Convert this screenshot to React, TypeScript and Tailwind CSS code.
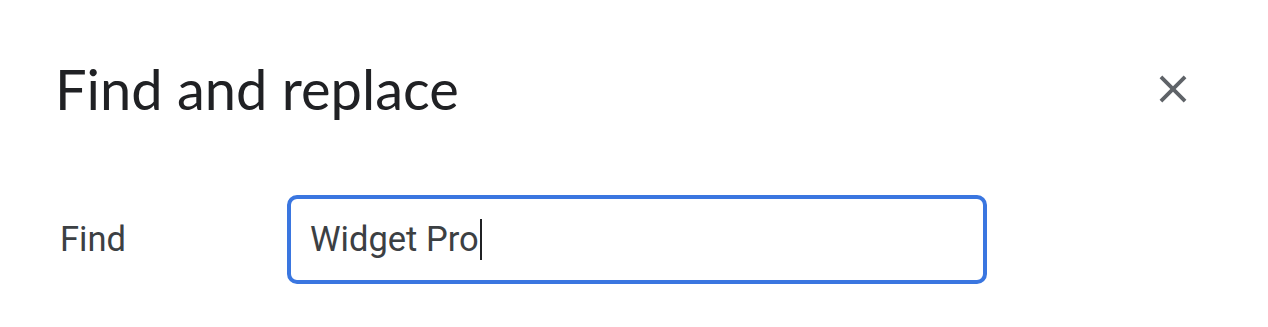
export default function App() {
  return (
    <div className="w-full h-[327px] bg-white pl-[55px] pr-[72px] pt-[57px]">
      {/* Header */}
      <div className="flex items-center justify-between">
        <h1 className="text-[56px] leading-[64px] text-[#202124] font-['Lato',sans-serif]">
          Find and replace
        </h1>
        <button className="w-[46px] h-[46px] flex items-center justify-center text-[#5f6368]">
          <svg viewBox="0 0 24 24" className="w-[46px] h-[46px]" fill="currentColor">
            <path d="M19 6.41L17.59 5 12 10.59 6.41 5 5 6.41 10.59 12 5 17.59 6.41 19 12 13.41 17.59 19 19 17.59 13.41 12z" />
          </svg>
        </button>
      </div>

      {/* Find row */}
      <div className="flex items-center mt-[74px] font-['Roboto',sans-serif] text-[34.5px] text-[#3c4043]">
        <label className="w-[232px] pl-[5px]">Find</label>
        <div className="w-[700px] h-[89px] border-4 border-[#3a76e0] rounded-[10px] pl-[19px] flex items-center">
          <span>Widget Pro</span>
          <span className="ml-[1px] w-[2px] h-[41px] bg-[#202124]" />
        </div>
      </div>
    </div>
  );
}
